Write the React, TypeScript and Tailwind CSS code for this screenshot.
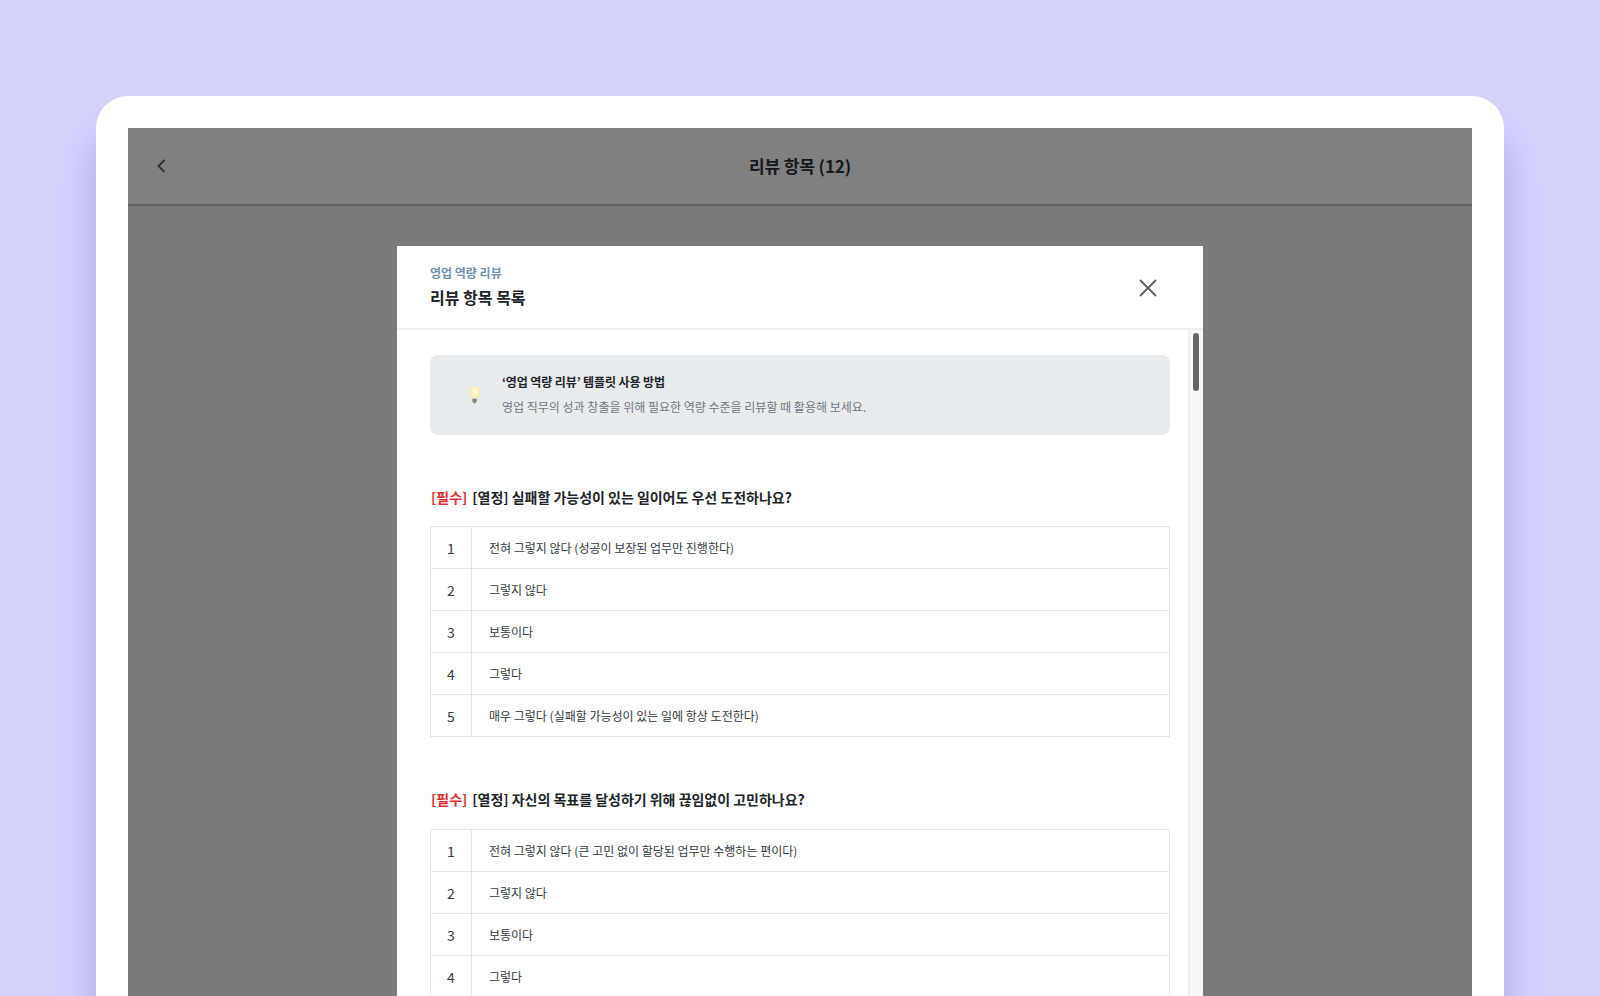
import React from "react";

type Question = {
  title: string;
  options: string[];
};

const questions: Question[] = [
  {
    title: "[열정] 실패할 가능성이 있는 일이어도 우선 도전하나요?",
    options: [
      "전혀 그렇지 않다 (성공이 보장된 업무만 진행한다)",
      "그렇지 않다",
      "보통이다",
      "그렇다",
      "매우 그렇다 (실패할 가능성이 있는 일에 항상 도전한다)",
    ],
  },
  {
    title: "[열정] 자신의 목표를 달성하기 위해 끊임없이 고민하나요?",
    options: [
      "전혀 그렇지 않다 (큰 고민 없이 할당된 업무만 수행하는 편이다)",
      "그렇지 않다",
      "보통이다",
      "그렇다",
    ],
  },
];

const BulbIcon = () => (
  <svg width="15" height="20" viewBox="0 0 14 18" fill="none">
    <defs>
      <radialGradient id="bulb" cx="50%" cy="45%" r="55%">
        <stop offset="0%" stopColor="#fffdee" />
        <stop offset="70%" stopColor="#fdf0b4" />
        <stop offset="100%" stopColor="#f3dfa0" />
      </radialGradient>
    </defs>
    <path
      d="M7 1C3.8 1 1.6 3.2 1.6 6c0 2.4 2.1 3.7 2.9 6h5c.8-2.3 2.9-3.6 2.9-6C12.400 3.200 10.200 1 7 1z"
      fill="url(#bulb)"
    />
    <path d="M4.900 12.500h4.200v2.300c0 .5-.4 .9-.9 1.100l-.5 1h-1.400l-.5-1c-.5-.2-.9-.6-.9-1.100z" fill="#85857c" />
  </svg>
);

const QuestionBlock = ({ question, tableGap }: { question: Question; tableGap: string }) => (
  <section className="mt-[50px]">
    <h3 className="flex h-6 items-center gap-[5px] pl-px text-sm font-bold leading-6 tracking-[-0.02px] text-[#212529]">
      <span className="text-[#e03131]">[필수]</span>
      <span>{question.title}</span>
    </h3>
    <div className={`${tableGap} border-t border-l border-r border-[#e4e6e8]`}>
      {question.options.map((option, i) => (
        <div key={i} className="flex h-[42px] border-b border-[#e4e6e8]">
          <div className="flex w-[41px] items-center justify-center border-r border-[#e4e6e8] text-sm text-[#343a40]">
            {i + 1}
          </div>
          <div className="flex flex-1 items-center pl-[17px] text-xs text-[#343a40]">{option}</div>
        </div>
      ))}
    </div>
  </section>
);

export default function App() {
  return (
    <div className="h-[996px] overflow-hidden bg-[#d5d2fe] px-24 pt-24 font-['Noto_Sans_CJK_KR','Noto_Sans',sans-serif]">
      <div className="h-[1100px] rounded-[32px] bg-white px-8 pt-8 shadow-[0_40px_40px_rgba(70,65,150,0.3)]">
        <div className="h-[1000px] bg-[#797a7c]">
          <header className="relative flex h-[78px] items-center justify-center border-b-2 border-[#636363] bg-[#808080]">
            <svg className="absolute left-[29px] top-[31px]" width="9" height="14" viewBox="0 0 9 14" fill="none">
              <path d="M7.500 1L1.500 7l6 6" stroke="#333538" strokeWidth="2" />
            </svg>
            <h1 className="text-[17px] font-bold tracking-[-0.1px] text-[#17181a]">리뷰 항목 (12)</h1>
          </header>

          <div className="flex justify-center pt-10">
            <div className="w-[806px] bg-white">
              <div className="flex h-[84px] items-center justify-between border-b-2 border-[#eeeeee] pl-[33px] pr-[46px]">
                <div className="pb-[2px]">
                  <p className="text-xs font-bold leading-[18px] text-[#6f92b0]">영업 역량 리뷰</p>
                  <h2 className="mt-[3px] text-base font-bold leading-6 text-[#212529]">리뷰 항목 목록</h2>
                </div>
                <svg className="mt-px" width="18" height="18" viewBox="0 0 18 18" fill="none">
                  <path d="M1 1l16 16M17 1L1 17" stroke="#5a6068" strokeWidth="1.800" />
                </svg>
              </div>

              <div className="flex">
                <div className="flex-1 pb-10 pl-[33px] pr-[18px] pt-[25px]">
                  <div className="flex h-20 items-center rounded-lg bg-[#e8ebee] pl-[37px]">
                    <BulbIcon />
                    <div className="ml-5 pb-[2px]">
                      <p className="text-xs font-bold leading-5 tracking-[-0.1px] text-[#212529]">
                        ‘영업 역량 리뷰’ 템플릿 사용 방법
                      </p>
                      <p className="mt-[5px] text-xs leading-5 text-[#72777d]">
                        영업 직무의 성과 창출을 위해 필요한 역량 수준을 리뷰할 때 활용해 보세요.
                      </p>
                    </div>
                  </div>
                  <QuestionBlock question={questions[0]} tableGap="mt-[17px]" />
                  <QuestionBlock question={questions[1]} tableGap="mt-[18px]" />
                </div>

                <div className="w-[15px] border-l-2 border-[#eeeeee] bg-[#f8f8f8] pl-[3px] pt-[3px]">
                  <div className="h-[58px] w-[6px] rounded-full bg-[#666666]" />
                </div>
              </div>
            </div>
          </div>
        </div>
      </div>
    </div>
  );
}
